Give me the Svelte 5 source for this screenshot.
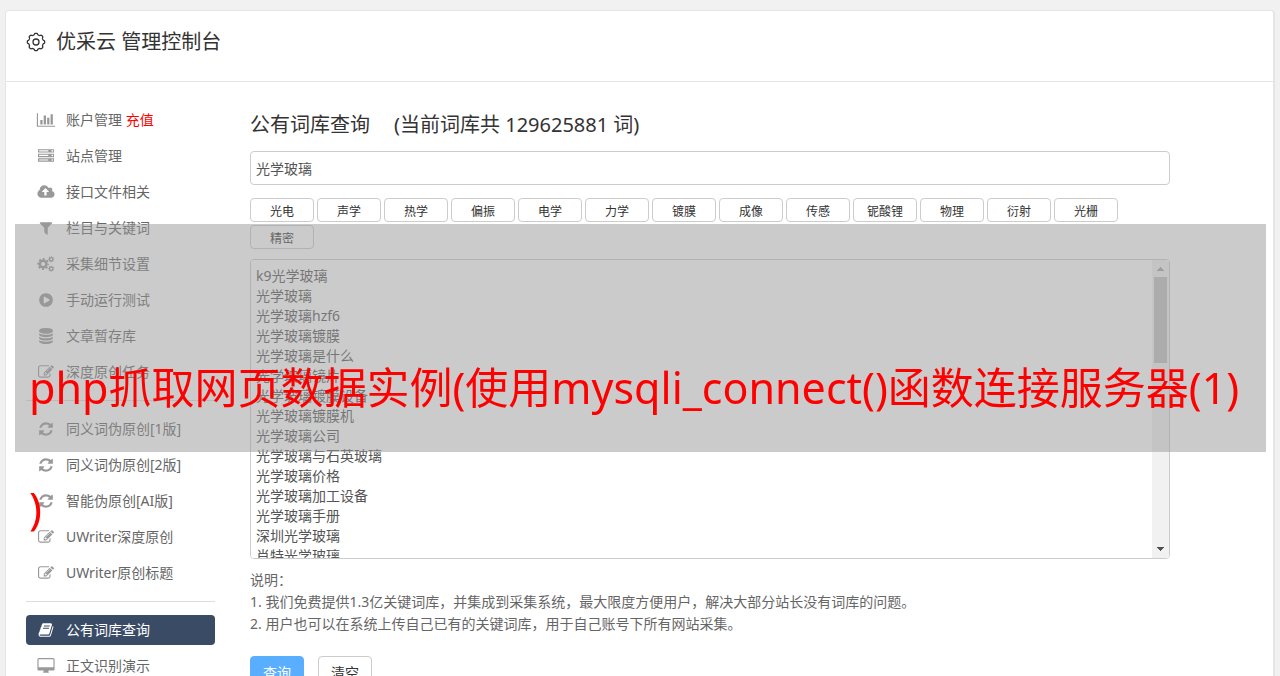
<script lang="ts">
  type MenuItem = {
    label: string;
    icon: string;
    tag?: string;
    active?: boolean;
  };

  type Icon = { box: string; path: string };

  const icons: Record<string, Icon> = {
    chart: {
      box: "0 0 2048 1792",
      path: "M640 896v512h-256v-512h256zm384-512v1024h-256v-1024h256zm1024 1152v128h-2048v-1536h128v1408h1920zm-640-896v768h-256v-768h256zm384-384v1152h-256v-1152h256z",
    },
    server: {
      box: "0 0 1792 1792",
      path: "M128 1408h1024v-128h-1024v128zm0-512h1024v-128h-1024v128zm1568 448q0-40-28-68t-68-28-68 28-28 68 28 68 68 28 68-28 28-68zm-1568-960h1024v-128h-1024v128zm1568 448q0-40-28-68t-68-28-68 28-28 68 28 68 68 28 68-28 28-68zm0-512q0-40-28-68t-68-28-68 28-28 68 28 68 68 28 68-28 28-68zm96 832v384h-1792v-384h1792zm0-512v384h-1792v-384h1792zm0-512v384h-1792v-384h1792z",
    },
    cloud: {
      box: "0 0 1920 1792",
      path: "M1280 864q0-14-9-23l-352-352q-9-9-23-9t-23 9l-351 351q-10 12-10 24 0 14 9 23t23 9h224v352q0 13 9.5 22.5t22.5 9.5h192q13 0 22.5-9.5t9.5-22.5v-352h224q13 0 22.5-9.5t9.5-22.5zm640 288q0 159-112.5 271.5t-271.5 112.5h-1088q-185 0-316.5-131.5t-131.5-316.5q0-130 70-240t188-165q-2-30-2-43 0-212 150-362t362-150q156 0 285.5 87t188.5 231q71-62 166-62 106 0 181 75t75 181q0 76-41 138 130 31 213.5 135.5t83.5 238.5z",
    },
    filter: {
      box: "0 0 1792 1792",
      path: "M1595 295q17 41-14 70l-493 493v742q0 42-39 59-13 5-25 5-27 0-45-19l-256-256q-19-19-19-45v-486l-493-493q-31-29-14-70 17-39 59-39h1280q42 0 59 39z",
    },
    play: {
      box: "0 0 1792 1792",
      path: "M896 128q209 0 385.5 103t279.5 279.5 103 385.5-103 385.5-279.5 279.5-385.5 103-385.5-103-279.5-279.5-103-385.5 103-385.5 279.5-279.5 385.5-103zm384 823q32-18 32-55t-32-55l-544-320q-31-19-64-1-32 19-32 56v640q0 37 32 56 16 8 32 8 17 0 32-9z",
    },
    database: {
      box: "0 0 1792 1792",
      path: "M896 768q237 0 443-43t325-127v170q0 69-103 128t-280 93.5-385 34.5-385-34.5-280-93.5-103-128v-170q119 84 325 127t443 43zm0 768q237 0 443-43t325-127v170q0 69-103 128t-280 93.5-385 34.5-385-34.5-280-93.5-103-128v-170q119 84 325 127t443 43zm0-384q237 0 443-43t325-127v170q0 69-103 128t-280 93.5-385 34.5-385-34.5-280-93.5-103-128v-170q119 84 325 127t443 43zm0-1152q208 0 385 34.5t280 93.5 103 128v128q0 69-103 128t-280 93.5-385 34.5-385-34.5-280-93.5-103-128v-128q0-69 103-128t280-93.5 385-34.5z",
    },
    edit: {
      box: "0 0 1792 1792",
      path: "M888 1184l116-116-152-152-116 116v56h96v96h56zm440-720q-16-16-33 1l-350 350q-17 17-1 33t33-1l350-350q17-17 1-33zm80 594v190q0 119-84.5 203.5t-203.5 84.5h-832q-119 0-203.5-84.5t-84.5-203.5v-832q0-119 84.5-203.5t203.5-84.5h832q63 0 117 25 15 7 18 23 3 17-9 29l-49 49q-14 14-32 8-23-6-45-6h-832q-66 0-113 47t-47 113v832q0 66 47 113t113 47h832q66 0 113-47t47-113v-126q0-13 9-22l64-64q15-15 35-7t20 29zm-96-738l288 288-672 672h-288v-288zm444 132l-92 92-288-288 92-92q28-28 68-28t68 28l152 152q28 28 28 68t-28 68z",
    },
    refresh: {
      box: "0 0 1792 1792",
      path: "M1639 1056q0 5-1 7-64 268-268 434.5t-478 166.5q-146 0-282.5-55t-243.5-157l-129 129q-19 19-45 19t-45-19-19-45v-448q0-26 19-45t45-19h448q26 0 45 19t19 45-19 45l-137 137q71 66 161 102t187 36q134 0 250-65t186-179q11-17 53-117 8-23 30-23h192q13 0 22.5 9.5t9.5 22.5zm25-800v448q0 26-19 45t-45 19h-448q-26 0-45-19t-19-45 19-45l138-138q-148-137-349-137-134 0-250 65t-186 179q-11 17-53 117-8 23-30 23h-199q-13 0-22.5-9.5t-9.5-22.5v-7q65-268 270-434.5t480-166.5q146 0 284 55.5t245 156.5l130-129q19-19 45-19t45 19 19 45z",
    },
    book: {
      box: "0 0 1792 1792",
      path: "M1703 478q40 57 18 129l-275 906q-19 64-76.5 107.5t-122.5 43.5h-923q-77 0-148.5-53.5t-99.5-131.5q-24-67-2-127 0-4 3-27t4-37q1-8-3-21.5t-3-19.5q2-11 8-21t16.5-23.5 16.5-23.5q23-38 45-91.5t30-91.5q3-10 .5-30t-.5-28q3-11 17-28t17-23q21-36 42-92t25-90q1-9-2.5-32t.5-28q4-13 22-30.5t22-22.5q19-26 42.5-84.5t27.5-96.5q1-8-3-25.5t-2-26.5q2-8 9-18t18-23 17-21q8-12 16.5-30.5t15-35 16-36 19.5-32 26.5-23.5 36-11.5 47.5 5.5l-1 3q38-9 51-9h761q74 0 114 56t18 130l-274 906q-36 119-71.5 153.5t-128.5 34.5h-869q-27 0-38 15-11 16-1 43 24 70 144 70h923q29 0 56-15.5t35-41.5l300-987q7-22 5-57 38 15 59 43zm-1064 2q-4 13 2 22.5t20 9.5h608q13 0 25.5-9.5t16.5-22.5l21-64q4-13-2-22.5t-20-9.5h-608q-13 0-25.5 9.5t-16.5 22.5zm-83 256q-4 13 2 22.5t20 9.5h608q13 0 25.5-9.5t16.5-22.5l21-64q4-13-2-22.5t-20-9.5h-608q-13 0-25.5 9.5t-16.5 22.5z",
    },
    desktop: {
      box: "-64 0 1920 1792",
      path: "M1728 992v-832q0-13-9.5-22.5t-22.5-9.5h-1600q-13 0-22.5 9.5t-9.5 22.5v832q0 13 9.5 22.5t22.5 9.5h1600q13 0 22.5-9.5t9.5-22.5zm128-832v1088q0 66-47 113t-113 47h-544q0 37 16 77.5t32 71 16 43.5q0 26-19 45t-45 19h-512q-26 0-45-19t-19-45q0-14 16-44t32-70 16-78h-544q-66 0-113-47t-47-113v-1088q0-66 47-113t113-47h1600q66 0 113 47t47 113z",
    },
  };

  // centre x, centre y, ring radius, ring width, tooth size
  const cogs = [
    [640, 896, 370, 270, 210],
    [1540, 370, 190, 160, 120],
    [1540, 1422, 190, 160, 120],
  ];

  const menuGroups: MenuItem[][] = [
    [
      { label: "账户管理", icon: "chart", tag: "充值" },
      { label: "站点管理", icon: "server" },
      { label: "接口文件相关", icon: "cloud" },
      { label: "栏目与关键词", icon: "filter" },
      { label: "采集细节设置", icon: "cogs" },
      { label: "手动运行测试", icon: "play" },
      { label: "文章暂存库", icon: "database" },
      { label: "深度原创任务", icon: "edit" },
    ],
    [
      { label: "同义词伪原创[1版]", icon: "refresh" },
      { label: "同义词伪原创[2版]", icon: "refresh" },
      { label: "智能伪原创[AI版]", icon: "refresh" },
      { label: "UWriter深度原创", icon: "edit" },
      { label: "UWriter原创标题", icon: "edit" },
    ],
    [
      { label: "公有词库查询", icon: "book", active: true },
      { label: "正文识别演示", icon: "desktop" },
    ],
  ];

  const tags = [
    "光电", "声学", "热学", "偏振", "电学", "力学", "镀膜",
    "成像", "传感", "铌酸锂", "物理", "衍射", "光栅", "精密",
  ];

  const words = [
    "k9光学玻璃",
    "光学玻璃",
    "光学玻璃hzf6",
    "光学玻璃镀膜",
    "光学玻璃是什么",
    "光学玻璃镜片",
    "光学玻璃镀膜设备",
    "光学玻璃镀膜机",
    "光学玻璃公司",
    "光学玻璃与石英玻璃",
    "光学玻璃价格",
    "光学玻璃加工设备",
    "光学玻璃手册",
    "深圳光学玻璃",
    "肖特光学玻璃",
  ];

  let keyword = $state("光学玻璃");
  let results = $state(words.join("\n"));

  const clearAll = (): void => {
    keyword = "";
    results = "";
  };

  // wavy outline of the header gear
  const gearPath = (): string => {
    const points: string[] = [];
    for (let i = 0; i < 120; i++) {
      const angle = (i / 120) * Math.PI * 2;
      const radius = 8 + 0.7 * Math.tanh(2 * Math.cos(angle * 8));
      points.push(
        `${(10 + radius * Math.sin(angle)).toFixed(2)} ${(10 - radius * Math.cos(angle)).toFixed(2)}`
      );
    }
    return `M${points.join("L")}z`;
  };
</script>

<div class="panel">
  <header class="panel-header">
    <svg class="gear" viewBox="0 0 20 20" aria-hidden="true">
      <path d={gearPath()} />
      <circle cx="10" cy="10" r="3" />
    </svg>
    <h1>优采云 管理控制台</h1>
  </header>

  <div class="panel-body">
    <nav class="sidebar">
      {#each menuGroups as group}
        <ul class="menu">
          {#each group as item (item.label)}
            <li>
              <a class="menu-item" class:active={item.active} href="#menu">
                {#if item.icon === "cogs"}
                  <svg class="menu-icon" viewBox="0 0 1920 1792" aria-hidden="true">
                    {#each cogs as [cx, cy, r, width, tooth]}
                      <circle class="cog" {cx} {cy} {r} stroke-width={width} />
                      <circle
                        class="cog"
                        {cx}
                        {cy}
                        r={r + width / 2 + tooth / 2 - 50}
                        stroke-width={tooth}
                        pathLength="16"
                        stroke-dasharray="1 1"
                        stroke-dashoffset="0.5"
                      />
                    {/each}
                  </svg>
                {:else}
                  <svg class="menu-icon" viewBox={icons[item.icon].box} aria-hidden="true">
                    <path d={icons[item.icon].path} />
                  </svg>
                {/if}
                <span>
                  {item.label}
                  {#if item.tag}<em>{item.tag}</em>{/if}
                </span>
              </a>
            </li>
          {/each}
        </ul>
      {/each}
    </nav>

    <main class="content">
      <h2>
        <label for="keyword">公有词库查询</label>
        <span>(当前词库共 129625881 词)</span>
      </h2>
      <input id="keyword" class="field" type="text" bind:value={keyword} />

      <div class="tags">
        {#each tags as tag}
          <button class="tag" type="button" onclick={() => (keyword = tag)}>{tag}</button>
        {/each}
      </div>

      <div class="results">
        <textarea class="field" aria-label="查询结果" bind:value={results}></textarea>
        <div class="scrollbar" aria-hidden="true">
          <svg class="arrow up" viewBox="0 0 17 17"><path d="M5 11h7v-1h-1v-1h-1v-1h-1v-1h-1v1h-1v1h-1v1h-1z" /></svg>
          <div class="thumb"></div>
          <svg class="arrow" viewBox="0 0 17 17"><path d="M5 6h7v1h-1v1h-1v1h-1v1h-1v-1h-1v-1h-1v-1h-1z" /></svg>
        </div>
      </div>

      <div class="notes">
        <p>说明：</p>
        <p>1. 我们免费提供1.3亿关键词库，并集成到采集系统，最大限度方便用户，解决大部分站长没有词库的问题。</p>
        <p>2. 用户也可以在系统上传自己已有的关键词库，用于自己账号下所有网站采集。</p>
      </div>

      <div class="actions">
        <button class="btn primary" type="button">查询</button>
        <button class="btn" type="button" onclick={clearAll}>清空</button>
      </div>
    </main>
  </div>
</div>

<div class="banner">php抓取网页数据实例(使用mysqli_connect()函数连接服务器(1))</div>

<style>
  :global(body) {
    background: #f1f1f1;
    overflow: hidden;
    color: #666;
    font: 14px/20px "Noto Sans", "Noto Sans CJK SC", sans-serif;
  }

  :global(#app) {
    position: relative;
    height: 100vh;
    overflow: hidden;
  }

  .panel {
    margin: 10px 5px 0;
    padding-bottom: 40px;
    background: #fff;
    border: 1px solid #e5e5e5;
    border-right-width: 2px;
    border-radius: 4px;
  }

  .panel-header {
    display: flex;
    align-items: center;
    gap: 10px;
    height: 62px;
    padding: 0 20px 8px;
    border-bottom: 1px solid #e5e5e5;
  }

  .gear {
    width: 20px;
    height: 20px;
    fill: none;
    stroke: #333;
    stroke-width: 1.3;
  }

  h1,
  h2 {
    margin: 0;
    color: #333;
    font-size: 20px;
    font-weight: 400;
    line-height: 28px;
  }

  .panel-body {
    display: flex;
    gap: 35px;
    padding: 23px 103px 0 20px;
  }

  .sidebar {
    flex: none;
    width: 189px;
  }

  .menu {
    display: flex;
    flex-direction: column;
    gap: 6px;
    margin: 0;
    padding: 0;
    list-style: none;
  }

  .menu + .menu {
    margin-top: 13px;
    padding-top: 13px;
    border-top: 1px solid #ddd;
  }

  .menu-item {
    display: flex;
    align-items: center;
    gap: 10px;
    height: 30px;
    padding: 0 10px;
    border-radius: 4px;
    color: #666;
    text-decoration: none;
  }

  .menu-item.active {
    background: #3a4b66;
    color: #fff;
  }

  .menu-item em {
    color: #f00;
    font-style: normal;
  }

  .menu-icon {
    width: 20px;
    height: 16px;
    fill: #999;
  }

  .active .menu-icon {
    fill: #fff;
  }

  .cog {
    fill: none;
    stroke: #999;
  }

  .content {
    flex: 1;
    min-width: 0;
    padding-top: 6px;
  }

  h2 {
    display: flex;
    gap: 24px;
    margin-bottom: 12px;
  }

  .field {
    display: block;
    box-sizing: border-box;
    width: 100%;
    height: 34px;
    padding: 6px 5px;
    border: 1px solid #ccc;
    border-radius: 4px;
    background: #fff;
    color: #555;
    font: inherit;
    outline: none;
  }

  .tags {
    display: flex;
    flex-wrap: wrap;
    gap: 3px;
    margin: 13px 0 10px;
    padding-right: 40px;
  }

  .tag {
    width: 64px;
    height: 24px;
    padding: 4px 0 0;
    border: 1px solid #ccc;
    border-radius: 4px;
    background: #fff;
    color: #333;
    font: inherit;
    font-size: 12px;
    line-height: 18px;
  }

  .results {
    position: relative;
  }

  .results .field {
    height: 300px;
    overflow-y: scroll;
    resize: none;
    scrollbar-width: none;
  }

  .scrollbar {
    position: absolute;
    top: 1px;
    right: 1px;
    bottom: 1px;
    display: flex;
    flex-direction: column;
    width: 17px;
    border-radius: 0 3px 3px 0;
    background: #f1f1f1;
  }

  .arrow {
    width: 17px;
    height: 17px;
    fill: #505050;
  }

  .arrow.up {
    fill: #a3a3a3;
  }

  .arrow:last-child {
    margin-top: auto;
  }

  .thumb {
    height: 86px;
    margin: 0 2px;
    background: #c1c1c1;
  }

  .notes {
    margin-top: 10px;
    line-height: 22px;
  }

  .notes p {
    margin: 0;
  }

  .actions {
    display: flex;
    gap: 14px;
    margin-top: 21px;
  }

  .btn {
    width: 54px;
    height: 34px;
    padding: 0;
    border: 1px solid #ccc;
    border-radius: 4px;
    background: #fff;
    color: #333;
    font: inherit;
  }

  .btn.primary {
    border-color: #5aaeff;
    background: #5aaeff;
    color: #fff;
  }

  .banner {
    position: absolute;
    top: 224px;
    left: 15px;
    right: 14px;
    box-sizing: border-box;
    height: 228px;
    padding: 104px 14px 0;
    background: rgba(152, 152, 152, 0.5);
    color: #f00;
    font-size: 43px;
    line-height: 120px;
    line-break: anywhere;
  }
</style>
